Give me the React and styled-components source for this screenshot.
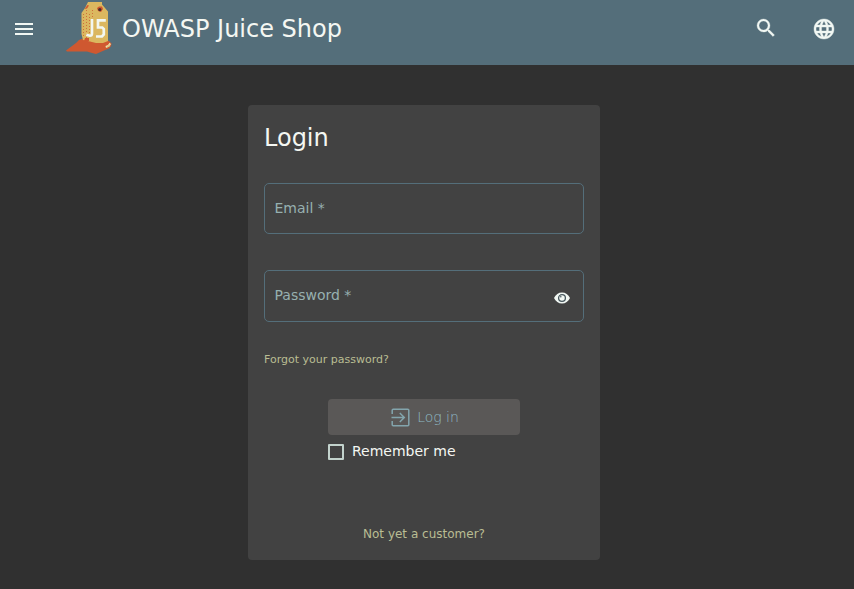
import React from 'react';
import styled, { createGlobalStyle } from 'styled-components';

const GlobalStyle = createGlobalStyle`
  * { box-sizing: border-box; }
  body {
    margin: 0;
    background: #303030;
    color: #f4f7f2;
    font-family: "DejaVu Sans", Verdana, sans-serif;
    overflow: hidden;
  }
`;

const Page = styled.div`
  height: 589px;
  display: flex;
  flex-direction: column;
  align-items: center;
`;

const Toolbar = styled.header`
  width: 100%;
  height: 65px;
  flex: none;
  display: flex;
  align-items: flex-start;
  background: #546e7a;
`;

const IconButton = styled.button`
  display: flex;
  align-items: center;
  justify-content: center;
  width: ${(p) => p.$size || 40}px;
  height: ${(p) => p.$height || 58}px;
  padding: 0;
  border: 0;
  background: none;
  color: #f1f7f3;
`;

const MenuButton = styled(IconButton)`
  margin-left: 4px;
`;

const Brand = styled.div`
  display: flex;
  align-items: flex-start;
  margin-left: 21px;
`;

const Title = styled.span`
  margin-left: 9px;
  line-height: 58px;
  font-size: 24px;
  white-space: nowrap;
`;

const Actions = styled.div`
  display: flex;
  margin-left: auto;
  margin-right: 10px;
  gap: 18px;
`;

const Card = styled.main`
  width: 352px;
  height: 455px;
  margin-top: 40px;
  margin-right: 6px;
  padding: 16px;
  display: flex;
  flex-direction: column;
  border-radius: 4px;
  background: #424242;
`;

const Heading = styled.h1`
  margin: 0 0 28px;
  height: 34px;
  line-height: 34px;
  font-size: 24px;
  font-weight: 400;
`;

const Field = styled.label`
  display: flex;
  align-items: center;
  justify-content: space-between;
  height: ${(p) => p.$height}px;
  margin-bottom: ${(p) => p.$gap}px;
  padding: 0 1px 0 9.5px;
  border: 1px solid #546e7a;
  border-radius: 5px;
  color: #97b0b0;
  font-size: 14px;
`;

const FieldLabel = styled.span`
  line-height: 20px;
  margin-bottom: ${(p) => p.$lift || 1}px;
`;

const RevealButton = styled(IconButton)`
  height: 40px;
  margin-top: 3px;
`;

const Link = styled.a`
  align-self: ${(p) => (p.$center ? 'center' : 'flex-start')};
  line-height: 16px;
  font-size: ${(p) => p.$fontSize}px;
  color: #b9bd93;
`;

const Submit = styled.button`
  display: flex;
  align-items: center;
  justify-content: center;
  gap: 7px;
  width: 192px;
  height: 36px;
  margin: 31px 0 0 64px;
  padding: 0 0 0 2px;
  border: 0;
  border-radius: 4px;
  background: #5a5857;
  color: #83a5ad;
  font: 300 14px "DejaVu Sans", sans-serif;

  svg {
    margin-top: 1px;
  }
`;

const SubmitText = styled.span`
  color: #8fb8c4;
`;

const Remember = styled.label`
  display: flex;
  align-items: center;
  gap: 8px;
  height: 20px;
  margin: 6px 0 65px 64px;
  font-size: 14px;
`;

const CheckMark = styled.span`
  width: 16px;
  height: 16px;
  margin-top: 2px;
  border: 2px solid #c3d3cd;
  border-radius: 1px;
`;

const Icon = ({ size = 24, d, ...rest }) => (
  <svg width={size} height={size} viewBox="0 0 24 24" fill="currentColor" {...rest}>
    <path d={d} />
  </svg>
);

const ICONS = {
  menu: 'M3 18h18v-2H3v2zm0-5h18v-2H3v2zm0-7v2h18V6H3z',
  search:
    'M15.5 14h-.79l-.28-.27A6.471 6.471 0 0 0 16 9.5 6.5 6.5 0 1 0 9.5 16c1.61 0 3.09-.59 4.23-1.57l.27.28v.79l5 4.99L20.49 19l-4.99-5zm-6 0C7.01 14 5 11.99 5 9.5S7.01 5 9.5 5 14 7.01 14 9.5 11.99 14 9.5 14z',
  language:
    'M11.99 2C6.47 2 2 6.48 2 12s4.47 10 9.99 10C17.52 22 22 17.52 22 12S17.52 2 11.99 2zm6.93 6h-2.95c-.32-1.25-.78-2.45-1.38-3.56 1.84.63 3.37 1.91 4.33 3.56zM12 4.04c.83 1.2 1.48 2.53 1.91 3.96h-3.82c.43-1.43 1.08-2.76 1.91-3.96zM4.26 14C4.1 13.36 4 12.69 4 12s.1-1.36.26-2h3.38c-.08.66-.14 1.32-.14 2s.06 1.34.14 2H4.26zm.82 2h2.95c.32 1.25.78 2.45 1.38 3.56-1.84-.63-3.37-1.9-4.33-3.56zm2.95-8H5.08c.96-1.66 2.49-2.93 4.33-3.56C8.81 5.55 8.35 6.75 8.03 8zM12 19.96c-.83-1.2-1.48-2.53-1.91-3.96h3.82c-.43 1.43-1.08 2.76-1.91 3.96zM14.34 14H9.66c-.09-.66-.16-1.32-.16-2s.07-1.35.16-2h4.68c.09.65.16 1.32.16 2s-.07 1.34-.16 2zm.25 5.56c.6-1.11 1.06-2.31 1.38-3.56h2.95c-.96 1.65-2.49 2.93-4.33 3.56zM16.36 14c.08-.66.14-1.32.14-2s-.06-1.34-.14-2h3.38c.16.64.26 1.31.26 2s-.1 1.36-.26 2h-3.38z',
};

const EyeIcon = () => (
  <svg width="16" height="12" viewBox="0 0 16 12">
    <path d="M0 6C1.6 2.5 4.5.5 8 .5S14.4 2.5 16 6C14.4 9.5 11.5 11.5 8 11.5S1.6 9.5 0 6Z" fill="currentColor" />
    <circle cx="8" cy="6" r="3.4" fill="currentColor" stroke="#46565c" strokeWidth="1.3" />
    <circle cx="6.8" cy="4.8" r="0.8" fill="#46565c" />
  </svg>
);

const LoginIcon = () => (
  <svg width="19" height="19" viewBox="0 0 19 19" fill="none" stroke="currentColor" strokeWidth="1.5">
    <path d="M1.2 6V2.2Q1.2 1.2 2.2 1.2H16.8Q17.8 1.2 17.8 2.2V16.8Q17.8 17.8 16.8 17.8H2.2Q1.2 17.8 1.2 16.8V13" />
    <path d="M.5 9.5H13M8.8 5L13.3 9.5L8.8 14" />
  </svg>
);

const Logo = () => (
  <svg width="48" height="56" viewBox="0 0 48 56">
    <path d="M1 50.5L11 43L14 40L18 38.5L40 40L44 41L46.5 43.5L46 46L44 48.5L39 50.5L31 54L27 53L22 51.5H2Z" fill="#cf5830" />
    <path d="M23 2H37V4.5L43 11.5V41L38 43H31L25 41.5L18 40L16.5 34V13L20 8Z" fill="#dbb75f" />
    <path d="M19.5 9L22.5 5L24 5.5L22 8.5ZM20 38H24V41H19Z" fill="#cf5830" />
    <path d="M18.5 14V38M21.5 10V38M24.5 14V33M27.5 10V17" stroke="#ce7039" strokeWidth="1" strokeDasharray="1 2" fill="none" />
    <path d="M32 8L34 6.5H37L38 9L36 12L33 11Z" fill="#cf5830" />
    <circle cx="34.8" cy="9.6" r="1.6" fill="#462d2c" />
    <path d="M27 19V33.5Q27 35.7 25 35.7L21.3 34.8" fill="none" stroke="#f2f7f1" strokeWidth="2.6" />
    <path d="M40.8 20.3H33V27.5H37.3L38.8 29V34.5L37 36.5H31" fill="none" stroke="#f2f7f1" strokeWidth="2.7" />
    <path d="M40.5 46L43 45L44.5 42.8L46 44L44.5 46.5L41 48Z" fill="#eee0af" />
    <path d="M42 47.5L45 44.5" stroke="#dbb75f" />
  </svg>
);

export default function App() {
  return (
    <Page>
      <GlobalStyle />
      <Toolbar>
        <MenuButton aria-label="Open menu">
          <Icon d={ICONS.menu} />
        </MenuButton>
        <Brand>
          <Logo />
          <Title>OWASP Juice Shop</Title>
        </Brand>
        <Actions>
          <IconButton $height={56} aria-label="Search">
            <Icon d={ICONS.search} stroke="currentColor" strokeWidth="0.3" />
          </IconButton>
          <IconButton aria-label="Language">
            <Icon d={ICONS.language} stroke="currentColor" strokeWidth="0.4" />
          </IconButton>
        </Actions>
      </Toolbar>
      <Card>
        <Heading>Login</Heading>
        <Field $height={51} $gap={36}>
          <FieldLabel>Email *</FieldLabel>
        </Field>
        <Field $height={52} $gap={30}>
          <FieldLabel $lift={3}>Password *</FieldLabel>
          <RevealButton aria-label="Show password">
            <EyeIcon />
          </RevealButton>
        </Field>
        <Link $fontSize={11}>Forgot your password?</Link>
        <Submit disabled>
          <LoginIcon />
          <SubmitText>Log in</SubmitText>
        </Submit>
        <Remember>
          <CheckMark />
          Remember me
        </Remember>
        <Link $fontSize={12} $center>Not yet a customer?</Link>
      </Card>
    </Page>
  );
}
